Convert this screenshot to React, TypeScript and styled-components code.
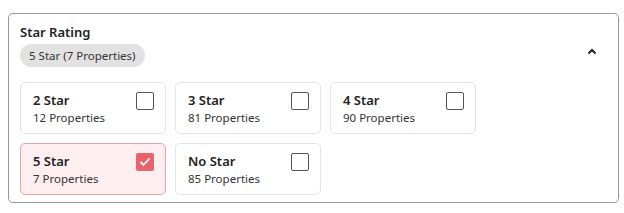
import styled, { createGlobalStyle } from "styled-components";

const GlobalStyle = createGlobalStyle`
  body {
    margin: 0;
    background: #ffffff;
    font-family: "Noto Sans", "Liberation Sans", sans-serif;
    color: #222;
  }
`;

const Panel = styled.section`
  box-sizing: border-box;
  width: 611px;
  height: 190px;
  margin: 13px 0 0 8px;
  border: 1px solid #9a9a9a;
  border-radius: 5px;
  padding: 9px 11px 0 11px;
`;

const Header = styled.div`
  display: flex;
  justify-content: space-between;
  align-items: flex-start;
`;

const HeadText = styled.div`
  display: flex;
  flex-direction: column;
  align-items: flex-start;
  gap: 3px;
`;

const Title = styled.h3`
  margin: 0;
  font-size: 13px;
  font-weight: 600;
  line-height: 18px;
  color: #222;
`;

const Pill = styled.span`
  display: inline-block;
  background: #e2e2e2;
  border-radius: 12px;
  padding: 0 9px;
  height: 23px;
  line-height: 23px;
  font-size: 11.5px;
  color: #333;
`;

const Toggle = styled.button`
  border: 0;
  background: none;
  padding: 0;
  margin: 23px 9px 0 0;
  width: 12px;
  height: 10px;
  display: flex;
  align-items: center;
  justify-content: center;
`;

const Grid = styled.div`
  display: grid;
  grid-template-columns: repeat(3, 146px);
  gap: 9px;
  margin-top: 15px;
`;

const Card = styled.label<{ $on?: boolean }>`
  box-sizing: border-box;
  height: 52px;
  display: flex;
  justify-content: space-between;
  align-items: flex-start;
  padding: 8px 11px 0 12px;
  border: 1px solid ${(p) => (p.$on ? "#f0a3a8" : "#e4e4e4")};
  background: ${(p) => (p.$on ? "#fdeeef" : "#ffffff")};
  border-radius: 5px;
`;

const CardText = styled.div`
  display: flex;
  flex-direction: column;
`;

const CardTitle = styled.span`
  font-size: 13px;
  font-weight: 600;
  line-height: 19px;
  color: #222;
`;

const CardSub = styled.span`
  font-size: 11.5px;
  line-height: 16px;
  color: #333;
`;

const Box = styled.span<{ $on?: boolean }>`
  box-sizing: border-box;
  width: 18px;
  height: 18px;
  margin-top: 1px;
  border-radius: 2px;
  border: ${(p) => (p.$on ? "none" : "1.5px solid #555")};
  background: ${(p) => (p.$on ? "#e8636b" : "transparent")};
  display: flex;
  align-items: center;
  justify-content: center;
`;

const options = [
  { label: "2 Star", count: 12, on: false },
  { label: "3 Star", count: 81, on: false },
  { label: "4 Star", count: 90, on: false },
  { label: "5 Star", count: 7, on: true },
  { label: "No Star", count: 85, on: false },
];

export default function App() {
  return (
    <>
      <GlobalStyle />
      <Panel>
        <Header>
          <HeadText>
            <Title>Star Rating</Title>
            <Pill>5 Star (7 Properties)</Pill>
          </HeadText>
          <Toggle aria-label="Collapse">
            <svg width="10" height="7" viewBox="0 0 10 7">
              <path d="M1.5 5.5 L5 2 L8.5 5.5" fill="none" stroke="#222" strokeWidth="2" />
            </svg>
          </Toggle>
        </Header>
        <Grid>
          {options.map((o) => (
            <Card key={o.label} $on={o.on}>
              <CardText>
                <CardTitle>{o.label}</CardTitle>
                <CardSub>{o.count} Properties</CardSub>
              </CardText>
              <Box $on={o.on}>
                {o.on && (
                  <svg width="12" height="10" viewBox="0 0 12 10">
                    <path d="M1.5 5 L4.5 8 L10.5 1.5" fill="none" stroke="#fff" strokeWidth="1.8" />
                  </svg>
                )}
              </Box>
            </Card>
          ))}
        </Grid>
      </Panel>
    </>
  );
}
